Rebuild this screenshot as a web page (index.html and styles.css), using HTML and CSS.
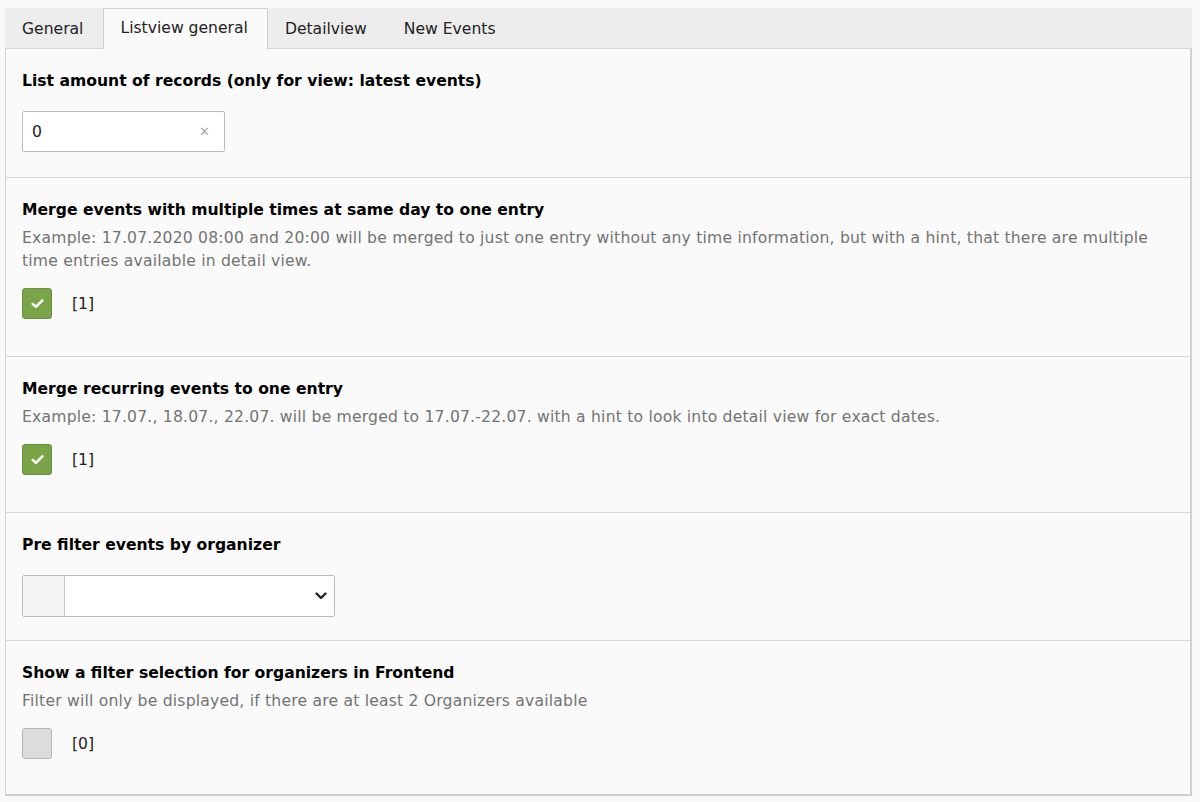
FILE: index.html
```html
<!DOCTYPE html>
<html lang="en">
<head>
<meta charset="utf-8">
<title>Listview general</title>
<link rel="stylesheet" href="styles.css">
</head>
<body>
<div class="tabs">
  <ul class="tab-nav">
    <li class="tab">General</li>
    <li class="tab active">Listview general</li>
    <li class="tab">Detailview</li>
    <li class="tab">New Events</li>
  </ul>
  <div class="panel">
    <section class="field field-input">
      <label class="field-label">List amount of records (only for view: latest events)</label>
      <div class="text-input">
        <span class="value">0</span>
        <span class="clear">&#x2715;</span>
      </div>
    </section>

    <section class="field field-check">
      <label class="field-label">Merge events with multiple times at same day to one entry</label>
      <p class="field-desc">Example: 17.07.2020 08:00 and 20:00 will be merged to just one entry without any time information, but with a hint, that there are multiple time entries available in detail view.</p>
      <div class="check-row">
        <span class="checkbox checked">
          <svg viewBox="0 0 16 16" width="15" height="15"><path d="M2.8 8.4 L6.3 11.6 L13.2 4.6" fill="none" stroke="#fff" stroke-width="2.6" stroke-linecap="round" stroke-linejoin="round"/></svg>
        </span>
        <span class="check-value">[1]</span>
      </div>
    </section>

    <section class="field field-check">
      <label class="field-label">Merge recurring events to one entry</label>
      <p class="field-desc">Example: 17.07., 18.07., 22.07. will be merged to 17.07.-22.07. with a hint to look into detail view for exact dates.</p>
      <div class="check-row">
        <span class="checkbox checked">
          <svg viewBox="0 0 16 16" width="15" height="15"><path d="M2.8 8.4 L6.3 11.6 L13.2 4.6" fill="none" stroke="#fff" stroke-width="2.6" stroke-linecap="round" stroke-linejoin="round"/></svg>
        </span>
        <span class="check-value">[1]</span>
      </div>
    </section>

    <section class="field field-select">
      <label class="field-label">Pre filter events by organizer</label>
      <div class="select">
        <span class="select-addon"></span>
        <span class="select-box">
          <svg viewBox="0 0 12 8" width="12" height="8"><path d="M1.5 1.5 L6 6 L10.5 1.5" fill="none" stroke="#222" stroke-width="2.4" stroke-linecap="round" stroke-linejoin="round"/></svg>
        </span>
      </div>
    </section>

    <section class="field field-check">
      <label class="field-label">Show a filter selection for organizers in Frontend</label>
      <p class="field-desc">Filter will only be displayed, if there are at least 2 Organizers available</p>
      <div class="check-row">
        <span class="checkbox"></span>
        <span class="check-value">[0]</span>
      </div>
    </section>
  </div>
</div>
</body>
</html>
```

FILE: styles.css
```css
html, body {
  margin: 0;
  background: #f8f8f8;
}

body {
  padding: 8px 8px 6px 5px;
  font-family: "DejaVu Sans", Verdana, sans-serif;
  font-size: 15.6px;
  color: #000;
}

.tab-nav {
  display: flex;
  list-style: none;
  margin: 0;
  padding: 0;
  background: #ededed;
  height: 40px;
  border-bottom: 1px solid #d5d5d5;
}

.tab {
  padding: 0 19px 0 16px;
  line-height: 40px;
  color: #222;
  border: 1px solid transparent;
  border-bottom: none;
}

.tab.active {
  background: #fafafa;
  border-color: #cfcfcf;
  height: 41px;
  box-sizing: border-box;
  line-height: 38px;
}

.panel {
  background: #fafafa;
  border: 1px solid #d0d0d0;
  border-top: none;
  border-right-width: 2px;
  border-bottom-width: 2px;
}

.field {
  padding: 22px 16px 0 16px;
  border-bottom: 1px solid #d5d5d5;
}

.field-input {
  padding-bottom: 25px;
}

.field-select {
  padding-bottom: 23px;
}

.field-check {
  padding-bottom: 37px;
}

.field:last-child {
  border-bottom: none;
  padding-bottom: 35px;
}

.field-label {
  display: block;
  font-weight: bold;
  line-height: 20px;
}

.field-input .field-label,
.field-select .field-label {
  margin-bottom: 20px;
}

.field-desc {
  margin: 7px 0 15px 0;
  color: #737373;
  line-height: 23px;
  letter-spacing: 0.2px;
}

.text-input {
  width: 203px;
  height: 41px;
  box-sizing: border-box;
  border: 1px solid #bbb;
  border-radius: 2px;
  background: #fff;
  display: flex;
  align-items: center;
  justify-content: space-between;
  padding: 0 14px 0 9px;
}

.text-input .value {
  color: #222;
}

.text-input .clear {
  color: #aaa;
  font-size: 13px;
}

.check-row {
  display: flex;
  align-items: center;
  gap: 20px;
}

.checkbox {
  width: 30px;
  height: 31px;
  box-sizing: border-box;
  border: 1px solid #b5b5b5;
  border-radius: 3px;
  background: #dcdcdc;
  display: flex;
  align-items: center;
  justify-content: center;
}

.checkbox.checked {
  background: #79a548;
  border-color: #6a9040;
}

.check-value {
  color: #222;
}

.select {
  display: flex;
  width: 313px;
  height: 42px;
  box-sizing: border-box;
  border: 1px solid #bbb;
  border-radius: 2px;
  background: #fff;
  overflow: hidden;
}

.select-addon {
  width: 41px;
  background: #f5f5f5;
  border-right: 1px solid #c8c8c8;
}

.select-box {
  flex: 1;
  display: flex;
  align-items: center;
  justify-content: flex-end;
  padding-right: 7px;
}
```
